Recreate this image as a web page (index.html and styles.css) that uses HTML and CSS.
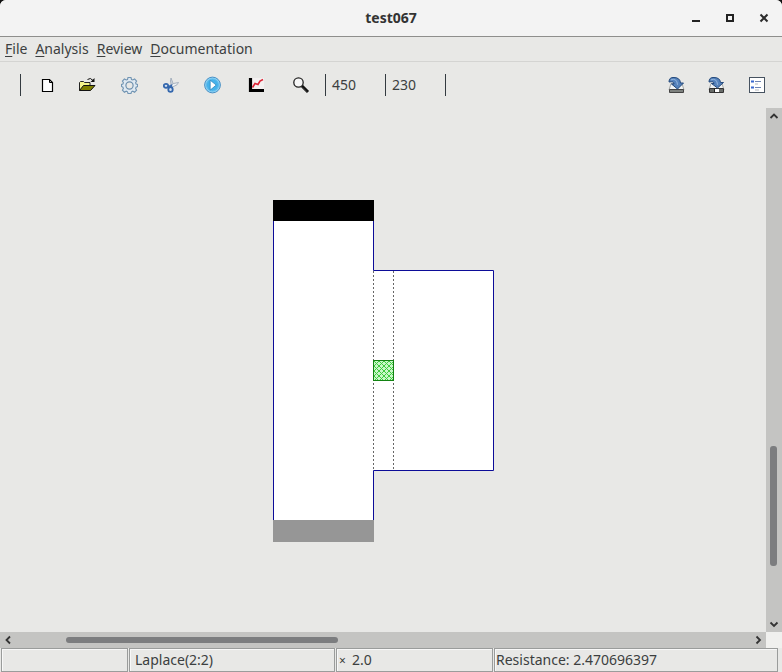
FILE: index.html
```html
<!DOCTYPE html>
<html lang="en">
<head>
<meta charset="utf-8">
<title>test067</title>
<link rel="stylesheet" href="styles.css">
</head>
<body>
<div class="window">
  <header class="titlebar">
    <h1 class="title">test067</h1>
    <div class="window-buttons">
      <button type="button" aria-label="Minimize"><svg width="10" height="10"><path d="M1 8h8" stroke="#222" stroke-width="2"/></svg></button>
      <button type="button" aria-label="Maximize"><svg width="10" height="10"><rect x="2" y="2" width="6" height="6" fill="none" stroke="#222" stroke-width="2"/></svg></button>
      <button type="button" aria-label="Close"><svg width="10" height="10"><path d="M1.500 1.500l7 7M8.500 1.500l-7 7" stroke="#2b2b2b" stroke-width="2"/></svg></button>
    </div>
  </header>

  <nav class="menubar">
    <button type="button"><u>F</u>ile</button>
    <button type="button"><u>A</u>nalysis</button>
    <button type="button"><u>R</u>eview</button>
    <button type="button"><u>D</u>ocumentation</button>
  </nav>

  <div class="toolbar">
    <span class="separator"></span>
    <div class="tools">
      <button type="button" aria-label="New"><svg width="13" height="18" viewBox="0 0 13 18"><path d="M1.500 3.500h7l3 3v9h-10z" fill="#fff" stroke="#000" stroke-width="1.200"/><path d="M8.500 3.500v3h3" fill="none" stroke="#000"/></svg></button>
      <button type="button" aria-label="Open"><svg width="17" height="18" viewBox="0 0 17 18"><path d="M.5 14.500V6.500l1-1h3l1 1h5.500v3" fill="#f5f58a" stroke="#222"/><path d="M.5 14.500L4.500 9.500H16l-4.500 5z" fill="#808000" stroke="#111"/><path d="M8.500 3.500q3-2.500 5.500 1" fill="none" stroke="#111"/><path d="M15.500 2v4h-4z" fill="#111"/></svg></button>
      <button type="button" aria-label="Settings"><svg width="17" height="18" viewBox="0 0 17 18"><path d="M7 1.500h3l.5 2 1.300.5 1.800-1 2 2-1 1.800.5 1.200 1.500.5v2l-1.500.7-.5 1.300 1 1.700-2 2-1.800-1-1.300.6-.5 1.700H7l-.5-1.700-1.300-.6-1.800 1-2-2 1-1.700-.5-1.300L.5 10.500v-2L1.900 8l.5-1.200-1-1.800 2-2 1.800 1L6.500 3.500z" fill="#dfe9f2" stroke="#7295b3" stroke-width="1.100"/><circle cx="8.500" cy="9.500" r="3.600" fill="#e8e8e6" stroke="#6f91ae" stroke-width="1.200"/></svg></button>
      <button type="button" aria-label="Cut"><svg width="16" height="18" viewBox="0 0 16 18"><path d="M8 2q-1 3 0 6l1 2 1.500-1.500z" fill="#cfd6df" stroke="#98a5b5" stroke-width=".8"/><path d="M15.500 6.500L10.500 7.500 7 10.500l3 .3 4-2z" fill="#edf0f3" stroke="#98a5b5" stroke-width=".8"/><ellipse cx="3" cy="9.800" rx="2.200" ry="2" fill="#d5e1f1" stroke="#3467ad" stroke-width="1.800"/><ellipse cx="7.500" cy="13.500" rx="2.200" ry="2.400" fill="#d5e1f1" stroke="#3467ad" stroke-width="1.800"/><path d="M5 10.500l4-1M7.800 11.500l.7-3" stroke="#3467ad" stroke-width="1.700"/></svg></button>
      <button type="button" aria-label="Run"><svg width="17" height="18" viewBox="0 0 17 18"><circle cx="8.500" cy="9" r="7.900" fill="#8bd0f3" stroke="#4b91c5"/><circle cx="8.500" cy="9" r="6" fill="#45b2ea" stroke="#5dbbec"/><path d="M6.200 4.200l6 4.900-6 5z" fill="#fff" stroke="#237fbb" stroke-width=".7"/></svg></button>
      <button type="button" aria-label="Plot"><svg width="20" height="18" viewBox="0 0 20 18"><path d="M4 2h14v11H4z" fill="#f4f1f1"/><path d="M4.500 2v12.500H18" fill="none" stroke="#000" stroke-width="3.200"/><path d="M6.500 11.500L9 7.500l3 1L14 5l3-1.500" fill="none" stroke="#dc2637" stroke-width="1.600"/></svg></button>
      <button type="button" aria-label="Zoom"><svg width="20" height="18" viewBox="0 0 20 18"><circle cx="7.500" cy="6.500" r="4.700" fill="#f7f7f7" stroke="#222" stroke-width="1.300"/><path d="M11 10l6 6" stroke="#111" stroke-width="3"/><path d="M11.500 11.300l4.500 4.500" stroke="#555" stroke-width=".6"/></svg></button>
    </div>
    <span class="separator"></span>
    <output class="coordinate">450</output>
    <span class="separator"></span>
    <output class="coordinate">230</output>
    <span class="separator"></span>
    <div class="tools tools-end">
      <button type="button" aria-label="Save"><svg width="17" height="18" viewBox="0 0 17 18"><path d="M3 7.500h11l2 6.500H1z" fill="#f1f3f3" stroke="#a4a7a7"/><path d="M1.500 13.500h14v3h-14z" fill="#7d817e" stroke="#444"/><path d="M1 6Q1 1 6 1.500q6 0 6.500 5.500h3L9.500 13 3.500 8H6Q6 5 1 6z" fill="#5582bb" stroke="#24497c"/><path d="M3 3.800q6-2 6.500 5" fill="none" stroke="#96b6de"/></svg></button>
      <button type="button" aria-label="Save as"><svg width="17" height="18" viewBox="0 0 17 18"><path d="M3 7.500h11l2 6.500H1z" fill="#f1f3f3" stroke="#a4a7a7"/><path d="M1.500 12.500h14v4h-14z" fill="#fff" stroke="#333"/><path d="M2 13h4v3H2zM11 13h4v3h-4z" fill="#686c69"/><path d="M6.500 12.500v4" stroke="#222"/><path d="M1 6Q1 1 6 1.500q6 0 6.500 5h3L9.500 12 3.500 7.500H6Q6 5 1 6z" fill="#5582bb" stroke="#24497c"/><path d="M3 3.800q6-2 6.500 5" fill="none" stroke="#96b6de"/></svg></button>
      <button type="button" aria-label="Properties"><svg width="17" height="18" viewBox="0 0 17 18"><rect x="1.500" y="1.500" width="15" height="15" fill="#fff" stroke="#465260"/><path d="M3 5.500h3M3 11.500h3" stroke="#3a69cf" stroke-width="2"/><path d="M7 5.500h6M7 11.500h6" stroke="#6e84b4"/><path d="M7 8h3M7 14h4" stroke="#b5b9c0"/></svg></button>
    </div>
  </div>

  <main class="workspace">
    <div class="canvas">
      <svg width="766" height="524" viewBox="0 108 766 524" role="img" aria-label="Resistor layout">
        <defs>
          <pattern id="hatch" width="5" height="5" patternUnits="userSpaceOnUse" x="374" y="361">
            <path d="M0 0l5 5M5 0L0 5" stroke="#3fca3f" stroke-width="1"/>
          </pattern>
        </defs>
        <path d="M273.500 200.500h100v70h120v200h-120v70h-100z" fill="#fff" stroke="#0c0c98"/>
        <path d="M373.500 271v199M393.500 271v199" stroke="#666" stroke-dasharray="2 2"/>
        <rect x="273" y="200" width="101" height="21" fill="#000"/>
        <rect x="273" y="520" width="101" height="22" fill="#969696"/>
        <rect x="373.500" y="360.500" width="20" height="20" fill="#c8f8c8"/>
        <rect x="373.500" y="360.500" width="20" height="20" fill="url(#hatch)" stroke="#128312"/>
      </svg>
    </div>
    <div class="scrollbar vertical">
      <button type="button" aria-label="Scroll up"><svg width="10" height="10"><path d="M1.500 7L5 3.500 8.500 7" fill="none" stroke="#333" stroke-width="1.800"/></svg></button>
      <div class="track"><div class="thumb"></div></div>
      <button type="button" aria-label="Scroll down"><svg width="10" height="10"><path d="M1.500 3.500L5 7l3.500-3.500" fill="none" stroke="#333" stroke-width="1.800"/></svg></button>
    </div>
    <div class="scrollbar horizontal">
      <button type="button" aria-label="Scroll left"><svg width="10" height="10"><path d="M7 1.500L3.500 5 7 8.500" fill="none" stroke="#333" stroke-width="1.800"/></svg></button>
      <div class="track"><div class="thumb"></div></div>
      <button type="button" aria-label="Scroll right"><svg width="10" height="10"><path d="M3.500 1.500L7 5 3.500 8.500" fill="none" stroke="#333" stroke-width="1.800"/></svg></button>
    </div>
    <div class="corner"></div>
  </main>

  <footer class="statusbar">
    <div class="status"></div>
    <div class="status status-indent">Laplace(2:2)</div>
    <div class="status"><span class="times">×</span>2.0</div>
    <div class="status">Resistance: 2.470696397</div>
  </footer>
</div>
</body>
</html>
```
FILE: styles.css
```css
* { box-sizing: border-box; }

body {
  margin: 0;
  background: #111;
  color: #3c3f40;
  font: 14px/20px "Noto Sans", sans-serif;
}

button {
  display: flex;
  align-items: center;
  justify-content: center;
  margin: 0;
  padding: 0;
  border: 0;
  background: none;
  color: inherit;
  font: inherit;
}

svg { display: block; flex: none; }

.window {
  display: flex;
  flex-direction: column;
  height: 100vh;
  overflow: hidden;
  border-radius: 6px 6px 0 0;
  background: #e8e8e6;
}

.titlebar {
  display: grid;
  grid-template-columns: 1fr auto 1fr;
  align-items: center;
  height: 37px;
  border-bottom: 1px solid #8e8e8c;
  background: #f3f3f3;
}

.title {
  grid-column: 2;
  margin: 0;
  color: #333;
  font-size: 14px;
  line-height: 20px;
}

.window-buttons {
  display: flex;
  justify-content: flex-end;
  gap: 24px;
  padding-right: 13px;
}

.menubar {
  display: flex;
  gap: 8px;
  height: 25px;
  padding: 0 5px;
  border-bottom: 1px solid #d4d4d2;
}

u { text-underline-offset: 2px; }

.toolbar {
  display: flex;
  align-items: center;
  height: 46px;
  padding: 0 17px 0 20px;
}

.separator {
  width: 1px;
  height: 22px;
  background: #333a40;
}

.tools {
  display: flex;
  gap: 25px;
  padding: 0 14px 0 20px;
}

.tools-end {
  gap: 23px;
  margin-left: auto;
  padding: 0;
}

.coordinate {
  width: 59px;
  padding-left: 6px;
}

.workspace {
  display: grid;
  flex: 1;
  grid-template: minmax(0, 1fr) 16px / minmax(0, 1fr) 16px;
  min-height: 0;
}

.canvas { overflow: hidden; }

.scrollbar {
  display: grid;
  background: #c4c4c2;
}

.vertical { grid-template-rows: 16px 1fr 16px; }
.horizontal { grid-template-columns: 16px 1fr 16px; }

.track {
  display: grid;
  place-items: stretch;
}

.vertical .track { grid-template-rows: 322fr 120fr 50fr; }
.horizontal .track { grid-template-columns: 50fr 272fr 412fr; }

.thumb {
  border-radius: 3px;
  background: #7c7d7f;
}

.vertical .thumb { grid-row: 2; margin: 0 5px 0 4px; }
.horizontal .thumb { grid-column: 2; margin: 5px 0; }

.corner { background: #f0f0ee; }

.statusbar {
  display: grid;
  grid-template-columns: 127px 206px 157px 1fr;
  gap: 1px;
  height: 24px;
  padding: 0 4px 1px 1px;
}

.status {
  padding: 0 1px;
  border: 1px solid #9a9c9b;
  box-shadow: inset 1px 1px #f8f8f8;
  line-height: 21px;
  white-space: nowrap;
}

.status-indent { padding-left: 5px; }

.times {
  margin: 0 6px 0 1px;
  font-size: 12px;
}
```
